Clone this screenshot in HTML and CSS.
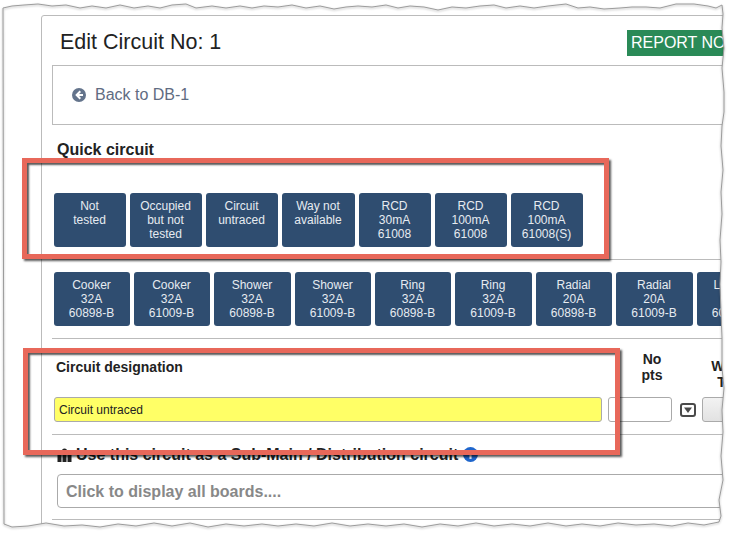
FILE: index.html
```html
<!DOCTYPE html>
<html lang="en">
<head>
  <meta charset="UTF-8" />
  <meta name="viewport" content="width=device-width, initial-scale=1.0"/>
  <title>Edit Circuit No: 1</title>
  <link rel="stylesheet" href="styles.css">
</head>
<body>
  <div class="paper">
    <div class="panel">
      <div class="title-row">
        <h1>Edit Circuit No: 1</h1>
        <span class="report-badge">REPORT NOTES</span>
      </div>
      <div class="back-box">
        <svg class="back-icon" viewBox="0 0 14 14">
          <circle cx="7" cy="7" r="7" fill="#64748c"/>
          <path d="M7.6 2.6 3.2 7l4.4 4.4 1.4-1.4-1.9-1.9h3.9V5.9H7.1L9 4z" fill="#fff"/>
        </svg>
        <a class="back-link">Back to DB-1</a>
      </div>
      <h2 class="quick-title">Quick circuit</h2>
      <div class="btn-row quick-row">
        <div class="qbtn">Not<br>tested</div>
        <div class="qbtn">Occupied<br>but not<br>tested</div>
        <div class="qbtn">Circuit<br>untraced</div>
        <div class="qbtn wide">Way not<br>available</div>
        <div class="qbtn">RCD<br>30mA<br>61008</div>
        <div class="qbtn">RCD<br>100mA<br>61008</div>
        <div class="qbtn">RCD<br>100mA<br>61008(S)</div>
      </div>
      <hr class="rule first-rule">
      <div class="btn-row type-row">
        <div class="qbtn type">Cooker<br>32A<br>60898-B</div>
        <div class="qbtn type">Cooker<br>32A<br>61009-B</div>
        <div class="qbtn type wide">Shower<br>32A<br>60898-B</div>
        <div class="qbtn type">Shower<br>32A<br>61009-B</div>
        <div class="qbtn type">Ring<br>32A<br>60898-B</div>
        <div class="qbtn type wide">Ring<br>32A<br>61009-B</div>
        <div class="qbtn type">Radial<br>20A<br>60898-B</div>
        <div class="qbtn type wide">Radial<br>20A<br>61009-B</div>
        <div class="qbtn type">Lighting<br>6A<br>60898-B</div>
      </div>
      <hr class="rule second-rule">
      <div class="field-heads">
        <div class="head-name">Circuit designation</div>
        <div class="head-pts">No<br>pts</div>
        <div class="head-wire">Wiring<br>Type</div>
      </div>
      <div class="field-row">
        <input class="name-input" value="Circuit untraced">
        <input class="pts-input">
        <svg class="drop-icon" viewBox="0 0 16 14">
          <rect x="1" y="1" width="14" height="12" rx="2" fill="#fff" stroke="#4a4a4a" stroke-width="2"/>
          <path d="M4 4.5h8L8 10z" fill="#4a4a4a"/>
        </svg>
        <input class="wire-input">
      </div>
      <hr class="rule third-rule">
      <div class="submain">
        <svg class="sitemap-icon" viewBox="0 0 15 14">
          <circle cx="7.5" cy="3" r="2.6" fill="#222"/>
          <rect x="0.5" y="7" width="4" height="7" fill="#222"/>
          <rect x="5.5" y="7" width="4" height="7" fill="#222"/>
          <rect x="10.5" y="7" width="4" height="7" fill="#222"/>
        </svg>
        <span>Use this circuit as a Sub-Main / Distribution circuit</span>
        <svg class="info-icon" viewBox="0 0 14 14">
          <circle cx="7" cy="7" r="7" fill="#1f66cc"/>
          <rect x="6" y="6" width="2" height="5" fill="#fff"/>
          <rect x="6" y="3" width="2" height="2" fill="#fff"/>
        </svg>
      </div>
      <div class="board-select">Click to display all boards....</div>
      <hr class="rule last-rule">
    </div>

    <!-- annotations on top of the screenshot -->
    <div class="callout callout-top"></div>
    <div class="callout callout-bottom"></div>

    <svg class="torn" viewBox="0 0 730 535">
      <path class="torn-mask" fill-rule="evenodd" d="M0 0H730V535H0Z M3 8 12 6 24 5 38 4 52 6 66 5 80 8 92 6 106 8 120 5 134 8 148 6 160 8 172 5 186 4 196 8 212 6 226 8 240 6 252 8 264 6 278 7 292 5 306 8 320 6 334 9 346 7 358 6 372 7 386 5 398 8 410 6 424 7 438 10 452 7 466 8 480 6 494 5 506 8 520 6 534 8 548 6 566 4 578 8 590 7 604 9 620 8 632 7 646 7 660 8 676 4 694 4 708 6 716 8 722 5 723 14 722 28 724 48 722 68 724 92 724 112 722 126 721 146 723 170 721 192 722 214 720 240 721 262 720 284 721 312 722 338 722 368 724 388 722 410 723 432 721 456 723 480 719 500 721 516 719 522 704 525 688 523 672 526 654 524 636 525 618 523 600 526 582 524 566 526 548 523 530 526 512 524 494 526 476 523 458 526 440 524 422 527 404 524 386 526 368 524 350 526 332 523 314 526 296 524 278 526 262 524 244 526 226 524 208 527 190 523 172 526 154 523 136 526 118 524 100 527 82 525 64 526 46 523 28 526 12 527 4 524Z"/>
      <path class="torn-line" d="M3 8 12 6 24 5 38 4 52 6 66 5 80 8 92 6 106 8 120 5 134 8 148 6 160 8 172 5 186 4 196 8 212 6 226 8 240 6 252 8 264 6 278 7 292 5 306 8 320 6 334 9 346 7 358 6 372 7 386 5 398 8 410 6 424 7 438 10 452 7 466 8 480 6 494 5 506 8 520 6 534 8 548 6 566 4 578 8 590 7 604 9 620 8 632 7 646 7 660 8 676 4 694 4 708 6 716 8 722 5 723 14 722 28 724 48 722 68 724 92 724 112 722 126 721 146 723 170 721 192 722 214 720 240 721 262 720 284 721 312 722 338 722 368 724 388 722 410 723 432 721 456 723 480 719 500 721 516 719 522 704 525 688 523 672 526 654 524 636 525 618 523 600 526 582 524 566 526 548 523 530 526 512 524 494 526 476 523 458 526 440 524 422 527 404 524 386 526 368 524 350 526 332 523 314 526 296 524 278 526 262 524 244 526 226 524 208 527 190 523 172 526 154 523 136 526 118 524 100 527 82 525 64 526 46 523 28 526 12 527 4 524Z"/>
    </svg>
  </div>
</body>
</html>
```

FILE: styles.css
```css
* {
  box-sizing: border-box;
}
html, body {
  margin: 0;
  background: #fff;
}
body {
  font-family: "Liberation Sans", Arial, sans-serif;
  color: #222;
  width: 730px;
  height: 535px;
  overflow: hidden;
}
.paper {
  position: relative;
  width: 730px;
  height: 535px;
  overflow: hidden;
  padding: 15px 0 0 41px;
}
.panel {
  width: 800px;
  height: 540px;
  border: 1px solid #bbb;
  border-radius: 3px 0 0 0;
  padding: 0 0 0 10px;
}
.title-row {
  display: flex;
  align-items: flex-start;
  height: 49px;
  padding: 14px 0 0 8px;
}
.title-row h1 {
  margin: 0;
  font-size: 21.5px;
  line-height: 24px;
  font-weight: normal;
  width: 567px;
}
.report-badge {
  background: #2a8a57;
  color: #fff;
  font-size: 16px;
  height: 26px;
  line-height: 26px;
  padding: 0 4px;
  white-space: nowrap;
}
.back-box {
  display: flex;
  align-items: center;
  gap: 9px;
  height: 60px;
  border: 1px solid #bbb;
  padding: 0 0 0 19px;
}
.back-icon {
  width: 14px;
  height: 14px;
}
.back-link {
  font-size: 16px;
  color: #5f6c82;
}
.quick-title {
  margin: 16px 0 0 5px;
  font-size: 16px;
  line-height: 18px;
  font-weight: bold;
}
.btn-row {
  display: flex;
  gap: 4px;
  margin-left: 2px;
}
.quick-row {
  margin-top: 34px;
}
.qbtn {
  flex: none;
  width: 72px;
  height: 54px;
  border-radius: 3px;
  background: #2f4d70;
  color: #e6ebf1;
  font-size: 12px;
  line-height: 14px;
  padding: 6px 1px 0 0;
  text-align: center;
}
.qbtn.wide {
  width: 73px;
}
.qbtn.type {
  width: 76px;
}
.qbtn.type.wide {
  width: 77px;
}
.rule {
  border: 0;
  border-top: 1px solid #bbb;
  margin: 0;
}
.first-rule {
  margin-top: 12px;
}
.type-row {
  margin-top: 12px;
}
.second-rule {
  margin-top: 12px;
}
.field-heads {
  display: flex;
  font-size: 14px;
  font-weight: bold;
  line-height: 16px;
  height: 58px;
  padding-top: 12px;
}
.head-name {
  width: 560px;
  margin-left: 4px;
  padding-top: 8px;
}
.head-pts {
  width: 64px;
  margin-left: 4px;
  text-align: center;
}
.head-wire {
  width: 70px;
  margin-left: 14px;
  padding-top: 7px;
  text-align: center;
}
.field-row {
  display: flex;
  align-items: center;
  margin-left: 2px;
  height: 25px;
}
.field-row input {
  height: 25px;
  border: 1px solid #aaa;
  border-radius: 3px;
  font-family: inherit;
  font-size: 12px;
  margin: 0;
}
.field-row .name-input {
  width: 548px;
  background: #ffff66;
  padding: 0 4px;
  color: #222;
}
.field-row .pts-input {
  width: 64px;
  margin-left: 6px;
  background: #fff;
}
.drop-icon {
  width: 16px;
  height: 14px;
  margin-left: 8px;
}
.field-row .wire-input {
  width: 70px;
  margin-left: 6px;
  background: linear-gradient(#f2f2f2, #e2e2e2);
}
.third-rule {
  margin-top: 12px;
}
.submain {
  display: flex;
  align-items: center;
  gap: 5px;
  height: 39px;
  margin: 0 0 0 5px;
  font-size: 16px;
  font-weight: bold;
  white-space: nowrap;
}
.sitemap-icon {
  width: 15px;
  height: 14px;
  margin-right: -1px;
}
.info-icon {
  width: 15px;
  height: 15px;
}
.board-select {
  width: 720px;
  height: 34px;
  margin-left: 5px;
  border: 1px solid #aaa;
  border-radius: 4px;
  color: #888;
  font-size: 16px;
  font-weight: bold;
  line-height: 33px;
  padding-left: 8px;
}
.last-rule {
  margin-top: 11px;
}
.callout {
  position: absolute;
  border: 5px solid #e8685a;
  box-shadow: 2px 2px 2px rgba(0,0,0,0.65), inset 2px 2px 2px rgba(0,0,0,0.65);
}
.callout-top {
  left: 22px;
  top: 158px;
  width: 587px;
  height: 101px;
}
.callout-bottom {
  left: 23px;
  top: 348px;
  width: 597px;
  height: 107px;
}
.torn {
  position: absolute;
  left: 0;
  top: 0;
  width: 730px;
  height: 535px;
}
.torn-mask {
  fill: #fff;
}
.torn-line {
  fill: none;
  stroke: #9c9c9c;
  stroke-width: 1;
  stroke-linejoin: round;
  filter: drop-shadow(0 1px 1px rgba(0,0,0,0.3));
}
```
